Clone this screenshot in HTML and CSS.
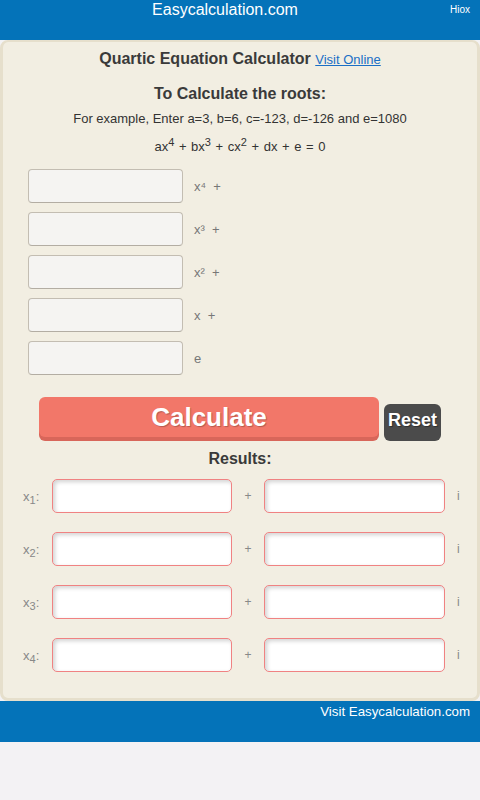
FILE: index.html
```html
<!DOCTYPE html>
<html>
<head>
<meta charset="utf-8">
<title>Quartic Equation Calculator</title>
<link rel="stylesheet" href="styles.css">
</head>
<body>
<header class="topbar">
  <div class="brand">Easycalculation.com</div>
  <div class="hiox">Hiox</div>
</header>
<main class="card">
  <h1 class="title">Quartic Equation Calculator <a class="visit" href="#">Visit Online</a></h1>
  <h2 class="subtitle">To Calculate the roots:</h2>
  <p class="example">For example, Enter a=3, b=6, c=-123, d=-126 and e=1080</p>
  <p class="equation">ax<sup>4</sup> + bx<sup>3</sup> + cx<sup>2</sup> + dx + e = 0</p>
  <div class="coeffs">
    <div class="coef-row"><input class="coef" type="text"><span class="coef-label">x⁴&nbsp; +</span></div>
    <div class="coef-row"><input class="coef" type="text"><span class="coef-label">x³&nbsp; +</span></div>
    <div class="coef-row"><input class="coef" type="text"><span class="coef-label">x²&nbsp; +</span></div>
    <div class="coef-row"><input class="coef" type="text"><span class="coef-label">x&nbsp; +</span></div>
    <div class="coef-row"><input class="coef" type="text"><span class="coef-label">e</span></div>
  </div>
  <div class="actions">
    <button class="calc" type="button">Calculate</button>
    <button class="reset" type="button">Reset</button>
  </div>
  <h2 class="results-title">Results:</h2>
  <div class="results">
    <span class="rlabel">x<sub>1</sub>:</span><input class="rin" type="text"><span class="plus">+</span><input class="rin" type="text"><span class="imag">i</span>
    <span class="rlabel">x<sub>2</sub>:</span><input class="rin" type="text"><span class="plus">+</span><input class="rin" type="text"><span class="imag">i</span>
    <span class="rlabel">x<sub>3</sub>:</span><input class="rin" type="text"><span class="plus">+</span><input class="rin" type="text"><span class="imag">i</span>
    <span class="rlabel">x<sub>4</sub>:</span><input class="rin" type="text"><span class="plus">+</span><input class="rin" type="text"><span class="imag">i</span>
  </div>
</main>
<footer class="footbar">Visit Easycalculation.com</footer>
</body>
</html>
```

FILE: styles.css
```css
* { box-sizing: border-box; }

html, body {
  margin: 0;
  padding: 0;
  background: #f3f2f4;
  font-family: "Liberation Sans", Arial, sans-serif;
  color: #333;
}

.topbar {
  display: flex;
  height: 40px;
  background: #0473b9;
  color: #fff;
}

.brand {
  flex: 1;
  text-align: center;
  font-size: 16px;
  line-height: 20px;
}

.hiox {
  width: 30px;
  padding-right: 10px;
  font-size: 10px;
  line-height: 20px;
}

.card {
  display: flex;
  flex-direction: column;
  background: #f2eee2;
  border: 3px solid #e6dfcc;
  border-top-width: 2px;
  border-radius: 8px;
  padding: 7px 0 26px;
}

.title {
  margin: 0;
  text-align: center;
  font-size: 16px;
  line-height: 20px;
  font-weight: bold;
  color: #3a3a3a;
}

.visit {
  font-size: 13px;
  font-weight: normal;
  color: #1a6fc6;
  text-decoration: underline;
}

.subtitle {
  margin: 14px 0 0;
  text-align: center;
  font-size: 16px;
  line-height: 20px;
  font-weight: bold;
  color: #3a3a3a;
}

.example {
  margin: 6px 0 0;
  text-align: center;
  font-size: 13px;
  line-height: 18px;
  color: #333;
}

.equation {
  margin: 10px 0 0;
  text-align: center;
  font-size: 13px;
  line-height: 18px;
  word-spacing: 1px;
  color: #333;
}

.equation sup {
  font-size: 11px;
  line-height: 0;
  vertical-align: 5px;
}

.coeffs {
  display: flex;
  flex-direction: column;
  gap: 9px;
  margin: 13px 0 0 25px;
}

.coef-row {
  display: flex;
  align-items: center;
}

.coef {
  width: 155px;
  height: 34px;
  margin: 0;
  background: #f5f4f2;
  border: 1px solid #c3bdb2;
  border-bottom-color: #b3ada3;
  border-radius: 4px;
  font: inherit;
}

.coef-label {
  margin-left: 11px;
  font-size: 13px;
  color: #777;
}

.actions {
  display: flex;
  justify-content: center;
  align-items: baseline;
  gap: 5px;
  margin-top: 22px;
}

.calc {
  width: 340px;
  height: 40px;
  margin: 0;
  padding: 0;
  border: 0;
  border-radius: 6px;
  background: #f27769;
  box-shadow: 0 4px 0 #d8665a;
  color: #fff;
  font-family: inherit;
  font-size: 26px;
  font-weight: bold;
  line-height: 40px;
  text-shadow: 1px 1px 1px rgba(0, 0, 0, 0.25);
}

.reset {
  margin: 0;
  padding: 6px 4px 10px;
  border: 0;
  border-radius: 6px;
  background: #4b4b4b;
  color: #fff;
  font-family: inherit;
  font-size: 18px;
  font-weight: bold;
  line-height: 21px;
  text-shadow: 1px 1px 1px rgba(0, 0, 0, 0.4);
}

.results-title {
  margin: 8px 0 0;
  text-align: center;
  font-size: 16px;
  line-height: 20px;
  font-weight: bold;
  color: #3a3a3a;
}

.results {
  display: grid;
  grid-template-columns: 29px 180px 32px 181px auto;
  row-gap: 19px;
  align-items: center;
  margin: 10px 0 0 20px;
}

.rlabel {
  font-size: 13px;
  color: #888;
}

.rlabel sub {
  font-size: 11px;
  line-height: 0;
  vertical-align: -3px;
}

.rin {
  width: 100%;
  height: 34px;
  margin: 0;
  background: #fff;
  border: 1px solid #f08282;
  border-radius: 5px;
  box-shadow: inset 2px 2px 4px rgba(0, 0, 0, 0.18);
  font: inherit;
}

.plus {
  text-align: center;
  font-size: 12px;
  color: #888;
}

.imag {
  padding-left: 12px;
  font-size: 12px;
  color: #888;
}

.footbar {
  height: 41px;
  padding: 3px 10px 0 0;
  background: #0473b9;
  color: #fff;
  text-align: right;
  font-size: 13.3px;
  line-height: 16px;
}
```
